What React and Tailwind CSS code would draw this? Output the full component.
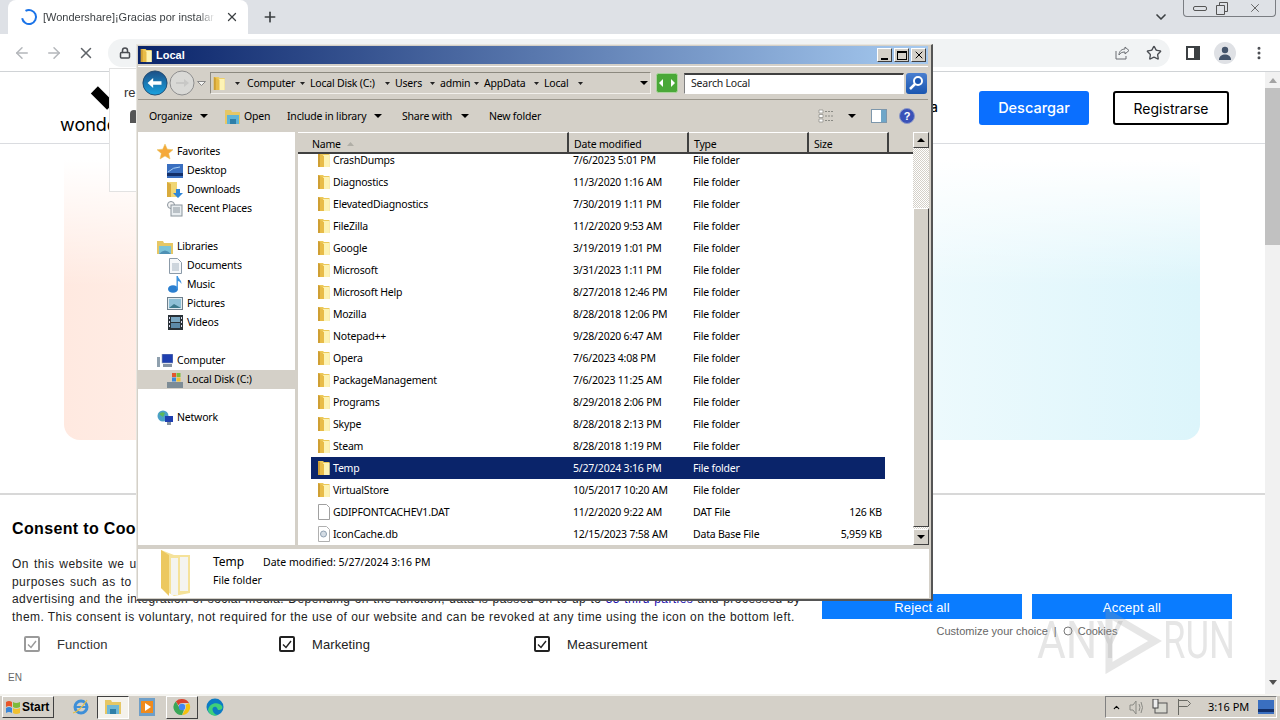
import React from "react";
import { ArrowLeft, ArrowRight, X, Lock, Plus, ChevronDown, Star, MoreVertical } from "lucide-react";

const rows = [
  ["CrashDumps", "7/6/2023 5:01 PM"],
  ["Diagnostics", "11/3/2020 1:16 AM"],
  ["ElevatedDiagnostics", "7/30/2019 1:11 PM"],
  ["FileZilla", "11/2/2020 9:53 AM"],
  ["Google", "3/19/2019 1:01 PM"],
  ["Microsoft", "3/31/2023 1:11 PM"],
  ["Microsoft Help", "8/27/2018 12:46 PM"],
  ["Mozilla", "8/28/2018 12:06 PM"],
  ["Notepad++", "9/28/2020 6:47 AM"],
  ["Opera", "7/6/2023 4:08 PM"],
  ["PackageManagement", "7/6/2023 11:25 AM"],
  ["Programs", "8/29/2018 2:06 PM"],
  ["Skype", "8/28/2018 2:13 PM"],
  ["Steam", "8/28/2018 1:19 PM"],
  ["Temp", "5/27/2024 3:16 PM"],
  ["VirtualStore", "10/5/2017 10:20 AM"],
];

const crumbs = [
  ["Computer", "w-[48px]"],
  ["Local Disk (C:)", "w-[70px]"],
  ["Users", "w-[30px]"],
  ["admin", "w-[29px]"],
  ["AppData", "w-[45px]"],
  ["Local", "w-[29px]"],
];

const FolderIcon = ({ size = 16 }) => (
  <svg width={size} height={size} viewBox="0 0 16 16" className="shrink-0">
    <path d="M2 1h5l1 1h5.500v13H2z" fill="#ecc95a" />
    <path d="M7 3h6.500v12H7z" fill="#fdf3b4" />
    <path d="M2 1l6 3v11H2z" fill="#e8bc48" />
    <path d="M2 1l2 1v13H2z" fill="#cf9f33" />
  </svg>
);

const TriDown = () => (
  <svg width="8" height="4" viewBox="0 0 8 4" className="shrink-0">
    <path d="M0 0h8L4 4z" fill="#000" />
  </svg>
);

const TinyArrow = () => (
  <svg width="5" height="3" viewBox="0 0 5 3" className="shrink-0"><path d="M0 0h5L2.500 3z" fill="#222" /></svg>
);

const NavIcon = ({ kind }) => {
  if (kind === "star")
    return (
      <svg width="16" height="16" viewBox="0 0 16 16">
        <path d="M8 0l2.300 5.200 5.700.5-4.300 3.700 1.300 5.600L8 12l-5 3 1.300-5.600L0 5.700l5.700-.5z" fill="#f5a93a" stroke="#e6c25a" strokeWidth=".5" />
      </svg>
    );
  if (kind === "desktop")
    return (
      <svg width="16" height="14" viewBox="0 0 16 14">
        <rect width="16" height="14" fill="#3a6fc0" />
        <rect y="9" width="16" height="3" fill="#13306a" />
        <path d="M1 8q5-5 12-5" stroke="#a8d0f5" fill="none" />
      </svg>
    );
  if (kind === "downloads")
    return (
      <svg width="16" height="17" viewBox="0 0 16 17">
        <path d="M0 1h10v15H0z" fill="#f0d675" />
        <path d="M0 1l4 2v13H0z" fill="#d9ab3c" />
        <path d="M9 8h4v4h3l-5 5-5-5h3z" fill="#2e86d8" />
      </svg>
    );
  if (kind === "recent")
    return (
      <svg width="16" height="16" viewBox="0 0 16 16">
        <circle cx="4" cy="4" r="3.500" fill="#f4f4f4" stroke="#8a949c" />
        <rect x="4" y="4" width="11" height="11" fill="#e8edf0" stroke="#8a949c" />
        <path d="M6 7h7M6 9h7M6 11h7" stroke="#8a949c" />
      </svg>
    );
  if (kind === "libraries")
    return (
      <svg width="16" height="14" viewBox="0 0 16 14">
        <path d="M0 1h6l1 2h9v11H0z" fill="#e6c765" />
        <rect x="2" y="6" width="12" height="8" fill="#7cc3d8" />
        <path d="M2 14q6-7 12 0" fill="#4e90b4" />
      </svg>
    );
  if (kind === "documents")
    return (
      <svg width="13" height="16" viewBox="0 0 13 16">
        <path d="M.5.5h8l4 4v11H.5z" fill="#f6f8fa" stroke="#8b9aa8" />
        <path d="M3 6h7M3 8h7M3 10h7M3 12h7" stroke="#a5b3c0" />
      </svg>
    );
  if (kind === "music")
    return (
      <svg width="14" height="17" viewBox="0 0 14 17">
        <ellipse cx="5" cy="13" rx="5" ry="3.800" fill="#2b7fd0" />
        <path d="M8.500 13V0h1.400c.3 3 4 4 3.500 8-.8-2-2.500-3-3.500-3v8z" fill="#3e94e0" />
      </svg>
    );
  if (kind === "pictures")
    return (
      <svg width="16" height="13" viewBox="0 0 16 13">
        <rect x=".5" y=".5" width="15" height="12" fill="#dfeaf0" stroke="#6d7f8c" />
        <rect x="2" y="2" width="12" height="9" fill="#8fc0d6" />
        <path d="M2 11l5-4 7 4z" fill="#3d7a8c" />
      </svg>
    );
  if (kind === "videos")
    return (
      <svg width="15" height="15" viewBox="0 0 15 15">
        <rect width="15" height="15" fill="#2a3238" />
        <rect x="3" y="2" width="9" height="5" fill="#7aa7c2" />
        <rect x="3" y="8" width="9" height="5" fill="#5d8aa8" />
        <path d="M1 2h1v2H1zM1 6h1v2H1zM1 10h1v2H1zM13 2h1v2h-1zM13 6h1v2h-1zM13 10h1v2h-1z" fill="#dde" />
      </svg>
    );
  if (kind === "computer")
    return (
      <svg width="16" height="14" viewBox="0 0 16 14">
        <rect x="5" y="0" width="11" height="9" fill="#1f3fb0" stroke="#9aa6b4" strokeWidth=".6" />
        <rect x="0" y="3" width="3" height="10" fill="#8fa0ae" />
        <rect x="6" y="10" width="9" height="3" fill="#8593a2" />
      </svg>
    );
  if (kind === "disk")
    return (
      <svg width="16" height="16" viewBox="0 0 16 16">
        <rect y="10" width="16" height="6" fill="#7d8c96" />
        <rect x="5" y="1" width="4" height="4" fill="#e2562e" />
        <rect x="9.500" y="1" width="4" height="4" fill="#7dbb3c" />
        <rect x="5" y="5.500" width="4" height="4" fill="#3a86d8" />
        <rect x="9.500" y="5.500" width="4" height="4" fill="#f0c030" />
      </svg>
    );
  return (
    <svg width="16" height="15" viewBox="0 0 16 15">
      <circle cx="6" cy="6" r="5.500" fill="#4aa0c8" />
      <path d="M2 4q3-3 6-1l-2 4z" fill="#5cb85c" />
      <rect x="8" y="6" width="8" height="6" fill="#1f3fb0" />
      <rect x="10" y="12" width="4" height="3" fill="#8593a2" />
    </svg>
  );
};

const NavItem = ({ icon, label, top, selected }) => (
  <div className={`h-[19px] flex items-center ${top ? "pl-[19px]" : "pl-[29px]"} ${selected ? "bg-[#d4d0c8]" : ""}`}>
    <div className="w-[16px] h-[17px] flex items-center justify-center shrink-0">
      <NavIcon kind={icon} />
    </div>
    <span className="ml-[4px] whitespace-nowrap">{label}</span>
  </div>
);

const Row = ({ name, date, type = "File folder", size, selected, icon }) => (
  <div className={`flex h-[22px] items-center ml-[13px] w-[574px] whitespace-nowrap ${selected ? "bg-[#0a246a] text-white" : ""}`}>
    <div className="w-[257px] flex items-center pl-[5px] gap-[1px]">
      {icon || <FolderIcon />}
      <span>{name}</span>
    </div>
    <div className="w-[120px] pl-[5px]">{date}</div>
    <div className="w-[120px] pl-[5px]">{type}</div>
    <div className="w-[77px] text-right pr-[3px]">{size}</div>
  </div>
);

const HeaderCell = ({ w, children }) => (
  <div className="h-full shrink-0 flex items-center pl-[5px] pt-[3px] border-r-2 border-r-[#404040] border-t border-t-white" style={{ width: w }}>
    {children}
  </div>
);

const ScrollButton = ({ up }) => (
  <div className="h-[16px] bg-[#d4d0c8] border-t border-l border-t-white border-l-white border-r border-b border-r-[#404040] border-b-[#404040] flex items-center justify-center shrink-0">
    <svg width="8" height="4" viewBox="0 0 8 4">
      <path d={up ? "M0 4h8L4 0z" : "M0 0h8L4 4z"} fill="#000" />
    </svg>
  </div>
);

const TitleButton = ({ children }) => (
  <div className="w-[15px] h-[14px] bg-[#d4d0c8] border-t border-l border-t-white border-l-white border-r border-b border-r-[#404040] border-b-[#404040] flex items-center justify-center">
    {children}
  </div>
);

const ExplorerWindow = () => (
  <div className="absolute left-[136px] top-[44px] w-[797px] h-[557px] bg-[#d4d0c8] border-t border-l border-t-[#e8e6e0] border-l-[#e8e6e0] border-r-2 border-b-2 border-r-[#555] border-b-[#555] pl-[1px] pt-[1px] text-[10.5px] tracking-[-0.2px] leading-none text-black font-['Noto_Sans',sans-serif] z-10">
    {/* title bar */}
    <div className="w-[790px] h-[18px] bg-[linear-gradient(to_right,#0a246a,#a6caf0)] flex items-center pl-[1px] pr-[2px]">
      <FolderIcon size={15} />
      <span className="ml-[2px] text-[11px] tracking-normal text-white font-bold font-['Liberation_Sans',sans-serif]">Local</span>
      <div className="ml-auto flex items-center gap-[2px]">
        <TitleButton><div className="w-[7px] h-[2px] bg-black mt-[7px]" /></TitleButton>
        <TitleButton><div className="w-[10px] h-[9px] border border-black border-t-2" /></TitleButton>
        <TitleButton><X size={12} strokeWidth={2} /></TitleButton>
      </div>
    </div>

    {/* address row */}
    <div className="w-[790px] mt-[2px] h-[34px] flex items-center border-t border-t-white border-b border-b-[#9a968c] pl-[4px] pr-[2px]">
      <svg width="26" height="26" viewBox="0 0 28 28" className="shrink-0">
        <defs>
          <linearGradient id="backBlue" x1="0" y1="0" x2="0" y2="1">
            <stop offset="0" stopColor="#1c4f86" />
            <stop offset="1" stopColor="#1aa3e0" />
          </linearGradient>
        </defs>
        <circle cx="14" cy="14" r="13" fill="url(#backBlue)" stroke="#20486e" />
        <path d="M6 14l6-5.500V12h9v4h-9v3.500z" fill="#fff" />
      </svg>
      <svg width="26" height="26" viewBox="0 0 26 26" className="shrink-0 ml-[1px]">
        <circle cx="13" cy="13" r="12" fill="#d9d9d6" stroke="#8e8e8e" />
        <path d="M7 12h8V9l5 4-5 4v-3H7z" fill="#c8c8c6" />
      </svg>
      <svg width="9" height="5" viewBox="0 0 9 5" className="shrink-0 ml-[2px]">
        <path d="M.5.5h8L4.500 4.500z" fill="#f4f4f2" stroke="#888" />
      </svg>
      <div className="ml-[4px] w-[441px] h-[22px] shrink-0 border border-[#f2f0ec] border-t-[#8c897f] border-l-[#8c897f] flex items-center whitespace-nowrap">
        <div className="ml-[1px]"><FolderIcon size={15} /></div>
        <div className="ml-[8px]"><TinyArrow /></div>
        <div className="ml-[7px] flex items-center gap-[5px]">
          {crumbs.map(([label, w]) => (
            <React.Fragment key={label}>
              <span className={w}>{label}</span>
              <TinyArrow />
            </React.Fragment>
          ))}
        </div>
        <div className="ml-auto mr-[2px]"><TriDown /></div>
      </div>
      <svg width="22" height="20" viewBox="0 0 22 20" className="shrink-0 ml-[5px]">
        <rect x=".5" y=".5" width="21" height="19" rx="2" fill="#4aa838" stroke="#a8d49a" />
        <path d="M3 10l4-4v8zM19 10l-4-4v8z" fill="#fff" />
      </svg>
      <div className="ml-[6px] w-[220px] h-[21px] shrink-0 bg-white border border-white border-t-2 border-t-[#404040] border-l-[#808080] flex items-center pl-[6px] text-[#222]">
        Search Local
      </div>
      <svg width="21" height="21" viewBox="0 0 21 21" className="shrink-0 ml-[2px]">
        <defs>
          <linearGradient id="searchBlue" x1="0" y1="0" x2="0" y2="1">
            <stop offset="0" stopColor="#4a7fd0" />
            <stop offset="1" stopColor="#1a56b0" />
          </linearGradient>
        </defs>
        <rect width="21" height="21" rx="3" fill="url(#searchBlue)" />
        <circle cx="12" cy="8" r="4" fill="#1a56b0" stroke="#fff" strokeWidth="2" />
        <path d="M9 11l-5 5" stroke="#fff" strokeWidth="2.500" />
      </svg>
    </div>

    {/* command bar */}
    <div className="w-[790px] h-[32px] flex items-center whitespace-nowrap">
      <span className="ml-[11px] w-[51px]">Organize</span>
      <TriDown />
      <svg width="16" height="15" viewBox="0 0 16 15" className="ml-[17px] shrink-0">
        <path d="M0 1h6l1 2h8v12H0z" fill="#e6c765" />
        <rect x="2" y="6" width="12" height="9" fill="#5fb4d8" />
        <path d="M5 15v-5h6v5z" fill="#2f7fa8" />
      </svg>
      <span className="ml-[3px] w-[43px]">Open</span>
      <span className="w-[87px]">Include in library</span>
      <TriDown />
      <span className="ml-[20px] w-[59px]">Share with</span>
      <TriDown />
      <span className="ml-[20px]">New folder</span>
      <div className="ml-auto flex items-center mr-[13px]">
        <svg width="17" height="14" viewBox="0 0 17 14">
          <path d="M1 1h4v3H1zM1 5.500h4v3H1zM1 10h4v3H1z" fill="#fff" stroke="#8a8a84" strokeWidth=".7" />
          <path d="M7 2.500h9M7 7h9M7 11.500h9" stroke="#8a8a84" strokeDasharray="2 1" />
        </svg>
        <div className="ml-[13px]"><TriDown /></div>
        <svg width="16" height="14" viewBox="0 0 16 14" className="ml-[15px]">
          <rect x=".5" y=".5" width="15" height="13" fill="#fff" stroke="#7d97ac" />
          <rect x="10" y="1" width="5" height="12" fill="#6fa6c8" />
        </svg>
        <svg width="16" height="16" viewBox="0 0 16 16" className="ml-[12px]">
          <circle cx="8" cy="8" r="7.500" fill="#3a52b8" stroke="#8b98c8" />
          <text x="8" y="12" textAnchor="middle" fontSize="11" fontWeight="700" fill="#fff" fontFamily="Liberation Sans">?</text>
        </svg>
      </div>
    </div>

    {/* main */}
    <div className="w-[791px] h-[413px] flex">
      <div className="w-[157px] bg-white pt-[10px] shrink-0">
        <NavItem top icon="star" label="Favorites" />
        <NavItem icon="desktop" label="Desktop" />
        <NavItem icon="downloads" label="Downloads" />
        <NavItem icon="recent" label="Recent Places" />
        <div className="h-[19px]" />
        <NavItem top icon="libraries" label="Libraries" />
        <NavItem icon="documents" label="Documents" />
        <NavItem icon="music" label="Music" />
        <NavItem icon="pictures" label="Pictures" />
        <NavItem icon="videos" label="Videos" />
        <div className="h-[19px]" />
        <NavItem top icon="computer" label="Computer" />
        <NavItem selected icon="disk" label="Local Disk (C:)" />
        <div className="h-[19px]" />
        <NavItem top icon="network" label="Network" />
      </div>
      <div className="w-[3px] shrink-0" />
      <div className="w-[615px] bg-white overflow-hidden shrink-0 flex flex-col">
        <div className="h-[22px] bg-[#d4d0c8] flex shrink-0 border-b-2 border-b-[#404040] relative z-10">
          <HeaderCell w={271}>
            <span className="ml-[9px]">Name</span>
            <svg width="7" height="4" viewBox="0 0 7 4" className="ml-[6px]"><path d="M0 4h7L3.500 0z" fill="#b0aea6" /></svg>
          </HeaderCell>
          <HeaderCell w={120}>Date modified</HeaderCell>
          <HeaderCell w={120}>Type</HeaderCell>
          <HeaderCell w={80}>Size</HeaderCell>
        </div>
        <div className="-mt-[5px]">
          {rows.map(([name, date]) => (
            <Row key={name} name={name} date={date} selected={name === "Temp"} />
          ))}
          <Row
            name="GDIPFONTCACHEV1.DAT"
            date="11/2/2020 9:22 AM"
            type="DAT File"
            size="126 KB"
            icon={
              <svg width="16" height="16" viewBox="0 0 16 16" className="shrink-0">
                <path d="M2.500.5h8l3 3v12h-11z" fill="#fff" stroke="#a0a0a0" />
              </svg>
            }
          />
          <Row
            name="IconCache.db"
            date="12/15/2023 7:58 AM"
            type="Data Base File"
            size="5,959 KB"
            icon={
              <svg width="16" height="16" viewBox="0 0 16 16" className="shrink-0">
                <path d="M2.500.5h8l3 3v12h-11z" fill="#fff" stroke="#b0b0b0" />
                <circle cx="7.500" cy="8" r="3" fill="#d4dce4" stroke="#8fa0b0" />
              </svg>
            }
          />
        </div>
      </div>
      <div className="w-[16px] shrink-0 flex flex-col bg-[repeating-conic-gradient(#d4d0c8_0_25%,#fff_0_50%)] bg-[length:2px_2px]">
        <ScrollButton up />
        <div className="h-[60px] shrink-0" />
        <div className="h-[319px] bg-[#d4d0c8] border-t border-l border-t-white border-l-white border-r border-b border-r-[#404040] border-b-[#404040] shrink-0" />
        <div className="flex-1" />
        <ScrollButton />
      </div>
    </div>

    {/* details pane */}
    <div className="w-[791px] h-[49px] mt-[4px] bg-white flex items-start pl-[20px] tracking-normal">
      <svg width="36" height="48" viewBox="0 0 36 48" className="shrink-0">
        <path d="M3 1l13 5h16v38l-16 3-13-8z" fill="#f5e29a" />
        <path d="M13 9h7v37h-7zM22 8h8v34h-8z" fill="#f4f4f0" />
        <path d="M3 1l8 5v41l-8-8z" fill="#ecc860" />
      </svg>
      <div className="ml-[19px] pt-[7px]">
        <div className="flex items-center h-[12px] whitespace-nowrap">
          <span className="text-[12px] w-[50px]">Temp</span>
          <span>Date modified: 5/27/2024 3:16 PM</span>
        </div>
        <div className="mt-[7px]">File folder</div>
      </div>
    </div>
  </div>
);

const Watermark = () => (
  <div className="absolute left-[1037px] top-[608px] flex items-center text-[52px] leading-none font-['Roboto',sans-serif] font-normal text-[#9a9a9a]/25 pointer-events-none z-20">
    <span className="w-[64px] inline-block scale-x-[0.85] origin-left whitespace-nowrap">ANY</span>
    <svg width="62" height="66" viewBox="0 0 62 66" className="shrink-0">
      <path d="M8 6v54l46-27z" fill="none" stroke="#9a9a9a" strokeOpacity=".25" strokeWidth="7" />
    </svg>
    <span className="w-[68px] inline-block scale-x-[0.7] origin-left whitespace-nowrap">RUN</span>
  </div>
);

const Check = ({ muted }) => (
  <div className={`w-[16px] h-[16px] rounded-[2px] border-2 flex items-center justify-center ${muted ? "border-[#9a9a9a]" : "border-[#222]"}`}>
    <svg width="10" height="9" viewBox="0 0 10 9">
      <path d="M1 4.500l3 3 5-6.500" fill="none" stroke={muted ? "#9a9a9a" : "#222"} strokeWidth="1.400" />
    </svg>
  </div>
);

const App = () => (
  <div className="w-[1280px] h-[720px] overflow-hidden relative bg-white flex flex-col font-['Liberation_Sans',sans-serif]">
    {/* tab strip */}
    <div className="h-[34px] shrink-0 bg-[#dee1e6] flex items-end relative">
      <div className="ml-[8px] w-[240px] h-[34px] bg-white rounded-t-[8px] flex items-center pl-[12px]">
        <svg width="18" height="18" viewBox="0 0 18 18" className="shrink-0">
          <path d="M9 2a7 7 0 1 1-6.600 4.700" fill="none" stroke="#1a73e8" strokeWidth="2" transform="rotate(-30 9 9)" />
        </svg>
        <span className="ml-[5px] w-[172px] overflow-hidden whitespace-nowrap text-[11px] text-[#3c4043] [mask-image:linear-gradient(to_right,#000_90%,transparent)]">[Wondershare]¡Gracias por instalar Wondershare</span>
        <X size={14} strokeWidth={2.200} className="ml-[10px] text-[#3c4043]" />
      </div>
      <Plus size={16} strokeWidth={2.500} className="ml-[14px] mb-[9px] text-[#3c4043]" />
      <ChevronDown size={16} strokeWidth={2.500} className="ml-auto mr-[111px] mb-[9px] text-[#3c4043]" />
      <div className="absolute right-[4px] top-0 w-[93px] h-[17px] border border-t-0 border-[#7a7d82] rounded-b-[4px] flex items-center text-[#555]">
        <div className="w-[31px] flex justify-center"><div className="w-[14px] h-[5px] border border-[#555] rounded-[2px]" /></div>
        <div className="w-[13px] flex justify-center">
          <svg width="12" height="13" viewBox="0 0 12 13"><path d="M3.500 3V.5h8v9H9M.5 3.500h8v9h-8z" fill="none" stroke="#555" /></svg>
        </div>
        <X size={14} strokeWidth={1.500} className="ml-[20px]" />
      </div>
    </div>

    {/* toolbar */}
    <div className="h-[38px] shrink-0 bg-white border-b border-[#d0d3d6] flex items-center text-[#5f6368]">
      <ArrowLeft size={18} className="ml-[13px] text-[#b4b7bb]" />
      <ArrowRight size={18} className="ml-[14px] text-[#b4b7bb]" />
      <X size={18} className="ml-[14px] text-[#5f6368]" />
      <div className="ml-[13px] w-[1062px] h-[28px] rounded-full bg-[#f1f3f4] flex items-center pl-[11px] pr-[8px]">
        <Lock size={12} strokeWidth={3} className="text-[#4a4d52]" />
        <svg width="16" height="16" viewBox="0 0 16 16" className="ml-auto mr-[16px]" fill="none" stroke="#6a6d72">
          <path d="M2 6v8h10v-3M5 10c0-4 3-6 6-6V2l4 3.500L11 9V7c-3 0-5 1-6 3z" />
        </svg>
        <Star size={16} strokeWidth={2} className="text-[#4a4d52]" />
      </div>
      <svg width="14" height="14" viewBox="0 0 14 14" className="ml-[16px]">
        <path d="M0 0h14v14H0z" fill="#3c4043" />
        <path d="M2 2h6v10H2z" fill="#fff" />
      </svg>
      <div className="ml-[14px] w-[22px] h-[22px] rounded-full bg-[#dfe1e5] flex items-center justify-center overflow-hidden">
        <svg width="14" height="14" viewBox="0 0 14 14">
          <circle cx="7" cy="4" r="3.200" fill="#44546a" />
          <path d="M1 14c0-4 3-5.500 6-5.500s6 1.500 6 5.500z" fill="#44546a" />
        </svg>
      </div>
      <MoreVertical size={16} strokeWidth={2.500} className="ml-[15px] text-[#4a4d52]" />
    </div>

    {/* web page */}
    <div className="flex-1 min-h-0 flex relative">
      <div className="w-[1265px] flex flex-col">
        <header className="h-[72px] shrink-0 border-b border-[#dadce0] flex items-center pl-[60px] pr-[36px] relative">
          <div className="w-[100px] h-full relative">
            <div className="absolute left-[31px] top-[21px] w-[23px] h-[10px] bg-black rotate-45" />
            <span className="absolute left-0 top-[39px] text-[18px] font-['Inter',sans-serif] font-normal text-black">wondershare</span>
          </div>
          <span className="ml-auto text-[13px] font-medium text-black font-['Inter',sans-serif]">Ayuda</span>
          <button className="ml-[41px] w-[110px] h-[34px] pt-[1px] rounded-[3px] bg-[#0a6fff] text-white text-[14.5px] font-medium font-['Inter',sans-serif]">Descargar</button>
          <button className="ml-[24px] w-[116px] h-[34px] pt-[1px] rounded-[3px] border-2 border-black text-black text-[14px] font-['Inter',sans-serif]">Registrarse</button>
        </header>
        <div className="mt-[16px] mx-[64px] w-[1136px] h-[280px] shrink-0 rounded-b-[16px] bg-[linear-gradient(to_bottom,#fff_0%,transparent_45%),linear-gradient(to_right,#ffe9e0,#fff_50%,#dcf5fb)]" />
        <section className="mt-[53px] flex-1 min-h-0 border-t-2 border-[#d8d8d8] text-[#222] pl-[12px] relative">
          <h2 className="mt-[23px] text-[16px] leading-[22px] tracking-[0.35px] font-bold text-black">Consent to Cookies</h2>
          <div className="flex">
            <div className="w-[810px] shrink-0">
              <p className="mt-[16px] text-[12px] leading-[17.6px] tracking-[0.45px] whitespace-nowrap">
                <span className="block [word-spacing:1.2px]">On this website we use cookies and similar functions to process end device information and personal data. The</span>
                <span className="block [word-spacing:1.2px]">purposes such as to integrate content, external services and elements of third parties, statistical analysis,</span>
                <span className="block [word-spacing:0.5px]">advertising and the integration of social media. Depending on the function, data is passed on to up to <a className="text-[#1a0dab]">55 third parties</a> and processed by</span>
                <span className="block">them. This consent is voluntary, not required for the use of our website and can be revoked at any time using the icon on the bottom left.</span>
              </p>
              <div className="mt-[9px] flex text-[13px] tracking-[0.1px] items-center h-[18px]">
                <div className="w-[255px] pl-[12px] flex items-center gap-[17px] text-[#333]"><Check muted /><span>Function</span></div>
                <div className="w-[255px] pl-[12px] flex items-center gap-[17px]"><Check /><span>Marketing</span></div>
                <div className="pl-[12px] flex items-center gap-[17px]"><Check /><span>Measurement</span></div>
              </div>
            </div>
            <div className="mt-[54px] w-[410px] shrink-0">
              <div className="flex gap-[10px]">
                <button className="w-[200px] h-[25px] pt-[2px] bg-[#0a7cff] text-white text-[13px] tracking-[0.2px]">Reject all</button>
                <button className="w-[200px] h-[25px] pt-[2px] bg-[#0a7cff] text-white text-[13px] tracking-[0.2px]">Accept all</button>
              </div>
              <div className="mt-[5px] flex items-center justify-center text-[11px] text-[#666] h-[14px]">
                <span>Customize your choice</span>
                <span className="mx-[6px]">|</span>
                <svg width="10" height="10" viewBox="0 0 10 10" className="mr-[5px]"><circle cx="5" cy="5" r="4" fill="none" stroke="#777" /></svg>
                <span>Cookies</span>
              </div>
            </div>
          </div>
          <div className="mt-[17px] -ml-[4px] text-[10px] text-[#666]">EN</div>
        </section>
      </div>
      {/* page scrollbar */}
      <div className="w-[15px] bg-[#f1f1f1] flex flex-col items-center shrink-0">
        <div className="h-[16px] flex items-center justify-center">
          <svg width="8" height="5" viewBox="0 0 8 5"><path d="M0 5h8L4 0z" fill="#a3a3a3" /></svg>
        </div>
        <div className="w-full h-[157px] bg-[#c1c1c1]" />
        <div className="mt-auto mb-[4px] h-[16px] flex items-center justify-center">
          <svg width="8" height="5" viewBox="0 0 8 5"><path d="M0 0h8L4 5z" fill="#505050" /></svg>
        </div>
      </div>
      {/* site menu behind the window */}
      <div className="absolute left-[109px] -top-[4px] w-[60px] h-[124px] bg-white border border-[#e2e2e2] text-[13px] text-[#333] pl-[14px] pt-[14px]">
        <div>re</div>
        <svg width="12" height="14" viewBox="0 0 12 14" className="mt-[6px] ml-[4px]">
          <path d="M2 14V5q0-4 4-4t4 4v9z" fill="#555" />
        </svg>
      </div>
    </div>

    {/* taskbar */}
    <div className="h-[26px] shrink-0 bg-[#d4d0c8] border-t-2 border-t-[#f4f3ef] flex items-center pl-[2px] pr-[3px] pb-[2px]">
      <div className="w-[52px] h-[22px] border border-t-white border-l-white border-r-[#404040] border-b-[#404040] flex items-center pl-[2px] text-[12px] font-bold text-black">
        <svg width="16" height="14" viewBox="0 0 16 14" className="shrink-0">
          <path d="M1 2q3-2 6 0v5q-3-2-6 0z" fill="#e8562a" />
          <path d="M8 2q3 2 7 0v5q-4 2-7 0z" fill="#7dbb3c" />
          <path d="M1 8q3-2 6 0v5q-3-2-6 0z" fill="#3a86d8" />
          <path d="M8 8q3 2 7 0v5q-4 2-7 0z" fill="#f0c030" />
        </svg>
        <span className="ml-[1px]">Start</span>
      </div>
      <svg width="18" height="18" viewBox="0 0 18 18" className="ml-[18px]">
        <circle cx="9" cy="9" r="6" fill="none" stroke="#3e8fd8" strokeWidth="3" />
        <path d="M3 9h12" stroke="#3e8fd8" strokeWidth="2" />
        <path d="M1 15q6-1 14-13" fill="none" stroke="#e8c040" strokeWidth="1.200" />
      </svg>
      <div className="ml-[7px] w-[32px] h-[23px] border border-t-[#404040] border-l-[#404040] border-r-white border-b-white bg-[#f4f2ec] flex items-center justify-center">
        <svg width="18" height="16" viewBox="0 0 18 16">
          <path d="M1 1h6l1 2h9v12H1z" fill="#e6c765" />
          <rect x="3" y="6" width="12" height="9" fill="#6fb8d8" />
          <path d="M6 15v-5h6v5z" fill="#2f7fa8" />
        </svg>
      </div>
      <svg width="16" height="18" viewBox="0 0 16 18" className="ml-[10px]">
        <rect width="16" height="18" fill="#6f9fc8" />
        <rect x="2" y="3" width="12" height="12" fill="#f08a1c" />
        <path d="M6 5l6 4-6 4z" fill="#fff" />
      </svg>
      <div className="ml-[11px] w-[32px] h-[23px] border border-t-white border-l-white border-r-[#404040] border-b-[#404040] flex items-center justify-center">
        <svg width="18" height="18" viewBox="0 0 18 18">
          <path d="M9 1a8 8 0 0 1 7 4H9a4 4 0 0 0-3.600 2.300L2.800 3.400A8 8 0 0 1 9 1z" fill="#d9432f" />
          <path d="M16 5a8 8 0 0 1-7 12l3.500-6A4 4 0 0 0 12.500 7z" fill="#f4c20d" />
          <path d="M2.800 3.400L6 9a4 4 0 0 0 5 2.700L9 17A8 8 0 0 1 2.800 3.400z" fill="#3aa757" />
          <circle cx="9" cy="9" r="3.200" fill="#4285f4" />
        </svg>
      </div>
      <svg width="18" height="18" viewBox="0 0 18 18" className="ml-[8px]">
        <circle cx="9" cy="9" r="8.500" fill="#0c7bc4" />
        <path d="M2 12c1-7 10-9 14-4 1 2 0 4-3 4-2 0-1-2-3-3-3-1-5 2-2 6 1 1 2 2 4 2-5 2-9-1-10-5z" fill="#3fd07a" />
      </svg>
      <div className="ml-auto w-[172px] h-[22px] border border-t-[#808080] border-l-[#808080] border-r-white border-b-white flex items-center pl-[6px] pr-[2px] text-black font-['Noto_Sans',sans-serif]">
        <ChevronDown size={9} strokeWidth={3} className="rotate-180" />
        <svg width="14" height="15" viewBox="0 0 14 15" className="ml-[8px]" fill="none" stroke="#8a8a84">
          <path d="M1 5h3l3-4v13l-3-4H1zM10 4q2 3.500 0 7M12 2q3 5.500 0 11" />
        </svg>
        <svg width="16" height="16" viewBox="0 0 16 16" className="ml-[9px]">
          <rect x="3" y="4" width="12" height="10" fill="#d8d8d0" stroke="#555" />
          <rect x="1" y="0" width="5" height="9" fill="#eee" stroke="#444" />
        </svg>
        <svg width="14" height="16" viewBox="0 0 14 16" className="ml-[9px]" fill="none" stroke="#6a6a64">
          <path d="M1.500 0v16M1.500 1.500h9l3 3-3 3h-9" />
        </svg>
        <span className="ml-[17px] text-[11px]">3:16 PM</span>
        <svg width="16" height="14" viewBox="0 0 16 14" className="ml-auto">
          <rect width="16" height="14" fill="#3a6fc0" />
          <rect y="9" width="16" height="3" fill="#13306a" />
        </svg>
      </div>
    </div>

    <ExplorerWindow />
    <Watermark />
  </div>
);

export default App;
